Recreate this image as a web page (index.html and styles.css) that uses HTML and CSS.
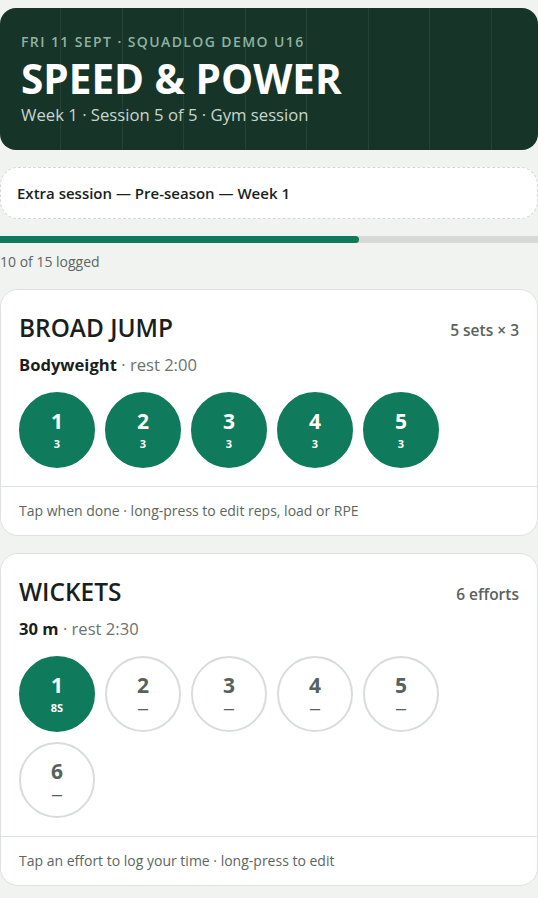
FILE: index.html
```html
<!DOCTYPE html>
<html lang="en">
<head>
    <meta charset="UTF-8">
    <meta name="viewport" content="width=device-width, initial-scale=1.0">
    <title>Speed &amp; Power</title>
    <link rel="stylesheet" href="styles.css">
</head>
<body>
    <div class="page">
        <!-- 头部 -->
        <header class="hero">
            <div class="hero-kicker">Fri 11 Sept · SquadLog Demo U16</div>
            <h1 class="hero-title">SPEED &amp; POWER</h1>
            <div class="hero-sub">Week 1 · Session 5 of 5 · Gym session</div>
        </header>

        <div class="note">Extra session — Pre-season — Week 1</div>

        <div class="progress">
            <div class="progress-fill" style="width: 66.7%"></div>
        </div>
        <div class="progress-label">10 of 15 logged</div>

        <!-- 练习 1 -->
        <section class="card">
            <div class="card-body">
                <div class="card-head">
                    <h2 class="card-title">BROAD JUMP</h2>
                    <span class="card-meta">5 sets × 3</span>
                </div>
                <div class="card-load"><b>Bodyweight</b> · rest 2:00</div>
                <div class="sets">
                    <div class="set done"><span class="set-n">1</span><span class="set-v">3</span></div>
                    <div class="set done"><span class="set-n">2</span><span class="set-v">3</span></div>
                    <div class="set done"><span class="set-n">3</span><span class="set-v">3</span></div>
                    <div class="set done"><span class="set-n">4</span><span class="set-v">3</span></div>
                    <div class="set done"><span class="set-n">5</span><span class="set-v">3</span></div>
                </div>
            </div>
            <div class="card-foot">Tap when done · long-press to edit reps, load or RPE</div>
        </section>

        <!-- 练习 2 -->
        <section class="card">
            <div class="card-body">
                <div class="card-head">
                    <h2 class="card-title">WICKETS</h2>
                    <span class="card-meta">6 efforts</span>
                </div>
                <div class="card-load"><b>30 m</b> · rest 2:30</div>
                <div class="sets">
                    <div class="set done"><span class="set-n">1</span><span class="set-v">8S</span></div>
                    <div class="set"><span class="set-n">2</span><span class="set-v">—</span></div>
                    <div class="set"><span class="set-n">3</span><span class="set-v">—</span></div>
                    <div class="set"><span class="set-n">4</span><span class="set-v">—</span></div>
                    <div class="set"><span class="set-n">5</span><span class="set-v">—</span></div>
                    <div class="set"><span class="set-n">6</span><span class="set-v">—</span></div>
                </div>
            </div>
            <div class="card-foot">Tap an effort to log your time · long-press to edit</div>
        </section>
    </div>
</body>
</html>
```

FILE: styles.css
```css
body,
div,
h1,
h2 {
    padding: 0;
    margin: 0;
}
body {
    background-color: #f1f3f1;
    font-family: "Open Sans", "Noto Sans", sans-serif;
    color: #1a1f1c;
}
.page {
    padding: 8px 0 20px;
}
.hero {
    background-color: #163428;
    background-image: repeating-linear-gradient(90deg, transparent 0 60px, rgba(255, 255, 255, 0.07) 60px 61px, transparent 61px 61.5px);
    border-radius: 16px;
    padding: 24px 21px 24px;
    height: 94px;
}
.hero-kicker {
    color: #8eb2a2;
    font-size: 14px;
    font-weight: 600;
    letter-spacing: 1.4px;
    text-transform: uppercase;
    line-height: 20px;
}
.hero-title {
    color: #fff;
    font-size: 40.5px;
    font-weight: 700;
    line-height: 44px;
    margin-top: 5px;
}
.hero-sub {
    color: #c8d6cf;
    font-size: 16.7px;
    line-height: 22px;
    margin-top: 3px;
}
.note {
    margin-top: 17px;
    background-color: #fff;
    border: 1px dashed #d3d8d5;
    border-radius: 18px;
    padding: 14px 16px;
    font-size: 15px;
    font-weight: 600;
    line-height: 22px;
}
.progress {
    margin-top: 17px;
    height: 7px;
    background-color: #d7d9d7;
}
.progress-fill {
    height: 100%;
    background-color: #0f7b5c;
    border-radius: 0 4px 4px 0;
}
.progress-label {
    font-size: 14px;
    color: #5b6661;
    line-height: 20px;
    margin-top: 9px;
}
.card {
    margin-top: 17px;
    background-color: #fff;
    border: 1px solid #dde2df;
    border-radius: 18px;
}
.card-body {
    padding: 22px 18px 18px;
}
.card-head {
    display: flex;
    justify-content: space-between;
    align-items: center;
}
.card-title {
    font-size: 24.4px;
    font-weight: 600;
    line-height: 32px;
}
.card-meta {
    font-size: 15.5px;
    font-weight: 600;
    color: #5a625e;
    padding-top: 4px;
}
.card-load {
    margin-top: 9px;
    font-size: 16.6px;
    color: #6a736e;
    line-height: 24px;
}
.card-load b {
    color: #1a1f1c;
    font-weight: 700;
}
.sets {
    display: flex;
    flex-wrap: wrap;
    gap: 10px;
    margin-top: 15px;
}
.set {
    width: 76px;
    height: 76px;
    box-sizing: border-box;
    border: 2px solid #d8dcda;
    border-radius: 50%;
    display: flex;
    flex-direction: column;
    align-items: center;
    justify-content: center;
    color: #58625d;
}
.set.done {
    background-color: #0f7b5c;
    border-color: #0f7b5c;
    color: #fff;
}
.set-n {
    font-size: 21px;
    font-weight: 700;
    line-height: 24px;
}
.set-v {
    font-size: 11px;
    font-weight: 700;
    line-height: 14px;
    margin-top: 4px;
}
.card-foot {
    border-top: 1px solid #dde2df;
    padding: 14px 18px;
    font-size: 14px;
    color: #5b6661;
    line-height: 20px;
}
```
